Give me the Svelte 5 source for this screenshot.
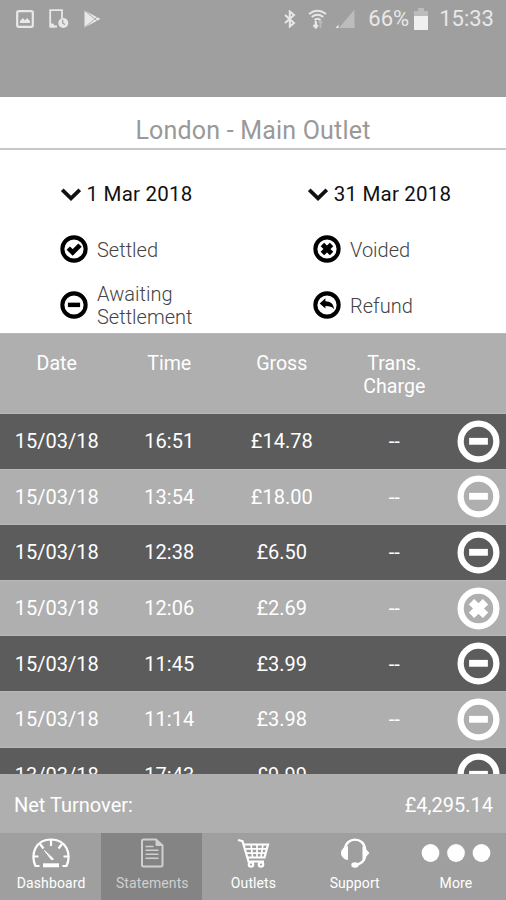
<script lang="ts">
  type Status = 'settled' | 'awaiting' | 'voided' | 'refund';

  interface Transaction {
    date: string;
    time: string;
    gross: string;
    charge: string;
    status: Status;
  }

  const transactions: Transaction[] = [
    { date: '15/03/18', time: '16:51', gross: '£14.78', charge: '--', status: 'awaiting' },
    { date: '15/03/18', time: '13:54', gross: '£18.00', charge: '--', status: 'awaiting' },
    { date: '15/03/18', time: '12:38', gross: '£6.50', charge: '--', status: 'awaiting' },
    { date: '15/03/18', time: '12:06', gross: '£2.69', charge: '--', status: 'voided' },
    { date: '15/03/18', time: '11:45', gross: '£3.99', charge: '--', status: 'awaiting' },
    { date: '15/03/18', time: '11:14', gross: '£3.98', charge: '--', status: 'awaiting' },
    { date: '13/03/18', time: '17:43', gross: '£9.99', charge: '--', status: 'awaiting' },
  ];

  const legend: { status: Status; label: string }[] = [
    { status: 'settled', label: 'Settled' },
    { status: 'voided', label: 'Voided' },
    { status: 'awaiting', label: 'Awaiting Settlement' },
    { status: 'refund', label: 'Refund' },
  ];

  const dates = ['1 Mar 2018', '31 Mar 2018'];
  const tabs = ['Dashboard', 'Statements', 'Outlets', 'Support', 'More'];

  let activeTab = $state('Statements');
</script>

{#snippet statusIcon(status: Status)}
  <svg class="status-icon" viewBox="0 0 44 44" fill="none" stroke="currentColor" aria-hidden="true">
    <circle cx="22" cy="22" r="18.3" stroke-width="6.4" />
    {#if status === 'settled'}
      <path d="M13 20.5l7 7 11.500-11.500" stroke-width="7.4" />
    {:else if status === 'awaiting'}
      <path d="M12.400 21.800h19.200" stroke-width="7" />
    {:else if status === 'voided'}
      <path d="M14.800 15l14.400 14M29.200 15L14.800 29" stroke-width="7.800" />
    {:else}
      <path d="M10.500 19.500l9-8v4.500c8 .2 13 4 13.500 12.500-3-4-7-5-13.500-5v4z" fill="currentColor" stroke="none" />
    {/if}
  </svg>
{/snippet}

<div class="screen">
  <header class="status-bar">
    <div class="notifications">
      <svg width="18" height="18" viewBox="0 0 18 18">
        <rect x="1.200" y="1.200" width="15.600" height="15.600" rx="1.500" fill="none" stroke="currentColor" stroke-width="2.200" />
        <path d="M4 13V11l3-3 2 2.500 2-2.500 3 3v2z" fill="currentColor" />
      </svg>
      <svg width="20" height="20" viewBox="0 0 20 20">
        <path d="M13 9V1.200H1.200V17.500H8" fill="none" stroke="currentColor" stroke-width="1.800" />
        <path d="M1 14.500h3.500l1.500 4H1z" fill="currentColor" />
        <circle cx="14.300" cy="14" r="5" fill="currentColor" />
        <path d="M13.700 10.800v3.400l2.300 1.300" fill="none" stroke="#9f9f9f" stroke-width="1.200" />
      </svg>
      <svg width="17" height="18" viewBox="0 0 17 18">
        <path d="M.5 .5l16 8.500-16 8.500z" fill="currentColor" />
        <path d="M1 1l10 8-10 8M11 9l2-2M11 9l2 2" fill="none" stroke="#9f9f9f" stroke-width=".8" />
      </svg>
    </div>
    <div class="system">
      <svg class="bluetooth" width="12" height="18" viewBox="0 0 12 18" fill="none" stroke="currentColor" stroke-width="2">
        <path d="M1 5l9 8-4.200 3.500v-15L10 5l-9 8" />
      </svg>
      <svg class="wifi" width="19" height="20" viewBox="0 0 19 20" fill="none" stroke="currentColor" stroke-width="1.900">
        <path d="M1 5q8.500-6.500 17 0M3.700 8q5.800-4.500 11.600 0M6.500 11q3-2.500 6 0" />
        <path d="M7.800 18.500v-6.500M5.500 16l2.300 2.500 2-2.500" stroke-width="2.200" />
        <path d="M12.500 19v-6.500M10.800 14l1.700-1.800 1.700 1.800" opacity=".35" />
      </svg>
      <svg class="signal" width="20" height="19" viewBox="0 0 20 19">
        <path d="M19.500.500V19H4z" fill="#bcbcbc" />
        <path d="M3.500 15.500V19H.5z" fill="currentColor" />
      </svg>
      <span class="battery-level">66%</span>
      <svg class="battery" width="14" height="22" viewBox="0 0 14 22">
        <path d="M4 0h6v3h4v19H0V3h4z" fill="#bcbcbc" />
        <path d="M0 8h14v14H0z" fill="#f0f0f0" />
      </svg>
      <span class="clock">15:33</span>
    </div>
  </header>

  <h1 class="outlet">London - Main Outlet</h1>

  <section class="filters">
    <div class="dates">
      {#each dates as date}
        <button class="date">
          <svg width="20" height="13" viewBox="0 0 20 13" fill="none" stroke="#111" stroke-width="3.800">
            <path d="M1.200 1.800L10 10.300l8.800-8.500" />
          </svg>
          {date}
        </button>
      {/each}
    </div>
    <div class="legend">
      {#each legend as item}
        <div class="legend-item">
          {@render statusIcon(item.status)}
          <span>{item.label}</span>
        </div>
      {/each}
    </div>
  </section>

  <div class="row head">
    <span>Date</span>
    <span>Time</span>
    <span>Gross</span>
    <span>Trans.<br />Charge</span>
  </div>

  <main class="list">
    {#each transactions as tx}
      <div class="row">
        <span>{tx.date}</span>
        <span>{tx.time}</span>
        <span>{tx.gross}</span>
        <span>{tx.charge}</span>
        {@render statusIcon(tx.status)}
      </div>
    {/each}
  </main>

  <div class="turnover">
    <span>Net Turnover:</span>
    <span>£4,295.14</span>
  </div>

  <nav class="tabs">
    {#each tabs as tab}
      <button class="tab" class:active={activeTab === tab} onclick={() => (activeTab = tab)}>
        {#if tab === 'Dashboard'}
          <svg width="40" height="30" viewBox="0 0 40 30" fill="none" stroke="currentColor" stroke-width="2.200">
            <path d="M8.500 28H4.500C-1 15.500 5 1.500 20 1.500S41 15.500 35.500 28H31.500" />
            <path d="M20 2v6M9 6l3.500 4.500M31 6l-3.500 4.500M2 18.500h5.500M38 18.500h-5.500" />
            <path d="M13.500 12.500l9 8.500-2 .800z" fill="currentColor" stroke-width="1" />
            <path d="M12 27.300h16" stroke-width="4" />
          </svg>
        {:else if tab === 'Statements'}
          <svg width="24" height="30" viewBox="0 0 24 30" fill="none" stroke="currentColor" stroke-width="2">
            <path d="M3.500 1.500h12.500l6.500 6v19.500q0 1.500-1.500 1.500H3.500Q2 28.500 2 27V3q0-1.500 1.500-1.500z" />
            <path d="M16 1.500v6h6.500z" fill="currentColor" stroke-width="1" />
            <path d="M5.500 8.500h8M5.500 12.300h13M5.500 16.200h13M5.500 20.200h13" stroke-width="1.500" />
          </svg>
        {:else if tab === 'Outlets'}
          <svg width="33" height="30" viewBox="0 0 33 30" fill="none" stroke="currentColor" stroke-width="2.200">
            <path d="M1 2l4.500 1.200L11.500 23.500H27" />
            <path d="M7 6.500h24L27.500 19.500H11" />
            <path d="M8.500 10.800h21M10 15.200h18.500M14 6l1.500 13M20 6v13M26 6l-2 13" stroke-width="1.700" />
            <circle cx="14" cy="26.500" r="2.200" />
            <circle cx="24" cy="26.500" r="2.200" />
          </svg>
        {:else if tab === 'Support'}
          <svg width="30" height="30" viewBox="0 0 30 30" fill="none" stroke="currentColor" stroke-width="2.400">
            <path d="M5 11C6-1.500 24-1.500 25 11v8c-.700 4-4 6.500-8.500 7.800" />
            <path d="M7.500 8.500v13C3.500 21 1.500 18 1.500 15s2-6 6-6.500zM23 8.500v13l6-6.500z" fill="currentColor" stroke-width="1" />
            <ellipse cx="15" cy="27" rx="3.700" ry="2.700" fill="currentColor" stroke="none" />
          </svg>
        {:else}
          <svg width="70" height="30" viewBox="0 0 70 30" fill="currentColor">
            <circle cx="9.500" cy="15" r="8.900" />
            <circle cx="35" cy="15" r="8.900" />
            <circle cx="60.500" cy="15" r="8.900" />
          </svg>
        {/if}
        <span>{tab}</span>
      </button>
    {/each}
  </nav>
</div>

<style>
  :global(body) {
    margin: 0;
    background: #fff;
  }

  button {
    margin: 0;
    padding: 0;
    border: 0;
    background: none;
    font: inherit;
    color: inherit;
  }

  svg {
    flex-shrink: 0;
  }

  .screen {
    display: flex;
    flex-direction: column;
    width: 506px;
    height: 900px;
    overflow: hidden;
    font-family: Roboto, sans-serif;
    font-size: 20px;
    line-height: 23px;
    color: #fff;
  }

  .status-bar {
    display: flex;
    justify-content: space-between;
    align-items: flex-start;
    box-sizing: border-box;
    height: 97px;
    padding: 7px 12px 0 16px;
    background: #9f9f9f;
    color: #e8e8e8;
    flex-shrink: 0;
  }

  .notifications,
  .system {
    display: flex;
    align-items: center;
    height: 23px;
  }

  .notifications {
    gap: 15px;
  }

  .bluetooth {
    margin-right: 12px;
  }

  .wifi {
    margin-right: 8px;
  }

  .signal {
    margin-right: 13px;
  }

  .battery-level,
  .clock {
    font-size: 22px;
  }

  .battery {
    margin: 0 11px 0 5px;
  }

  .outlet {
    box-sizing: border-box;
    height: 53px;
    margin: 0;
    padding-top: 19px;
    border-bottom: 2px solid #c8c8c8;
    font-size: 25px;
    font-weight: 400;
    line-height: 29px;
    letter-spacing: 0.2px;
    text-align: center;
    color: #999;
    flex-shrink: 0;
  }

  .filters {
    box-sizing: border-box;
    height: 183px;
    padding-top: 33px;
    flex-shrink: 0;
  }

  .dates,
  .legend {
    display: grid;
    grid-template-columns: 1fr 1fr;
  }

  .date {
    display: flex;
    justify-content: center;
    align-items: center;
    gap: 6px;
    font-size: 20.5px;
    letter-spacing: 0.2px;
    color: #111;
  }

  .legend {
    grid-template-rows: 56px 56px;
    margin-top: 15px;
  }

  .legend-item {
    display: flex;
    align-items: center;
    gap: 9px;
    padding-left: 60px;
    font-weight: 300;
    color: #444;
  }

  .legend-item span {
    width: 100px;
    padding-top: 2px;
  }

  .legend-item .status-icon {
    width: 28px;
    height: 28px;
    color: #000;
  }

  .row {
    display: grid;
    grid-template-columns: repeat(4, 112.5px) 56px;
    align-items: center;
    box-sizing: border-box;
    height: 55.6px;
    border-top: 1px solid #b8b8b8;
    background: #afafaf;
    text-align: center;
    flex-shrink: 0;
  }

  .row span {
    padding: 1px 0 0 1px;
  }

  .row.head {
    align-items: start;
    height: 80px;
    padding-top: 17px;
    font-size: 19.6px;
  }

  .list {
    height: 361px;
    overflow: hidden;
    flex-shrink: 0;
  }

  .list .row:nth-child(odd) {
    background: #5c5c5c;
  }

  .row .status-icon {
    justify-self: center;
    width: 43px;
    height: 43px;
  }

  .turnover {
    display: flex;
    justify-content: space-between;
    align-items: center;
    box-sizing: border-box;
    height: 59px;
    padding: 4px 13px 0 14px;
    background: #afafaf;
    flex-shrink: 0;
  }

  .tabs {
    display: grid;
    grid-template-columns: repeat(5, 1fr);
    height: 67px;
    background: #9f9f9f;
  }

  .tab {
    display: flex;
    flex-direction: column;
    align-items: center;
    padding: 5px 0 0 1px;
    font-size: 14px;
    line-height: 16px;
    letter-spacing: 0.1px;
    color: #fff;
  }

  .tab span {
    margin-top: 7px;
  }

  .tab.active {
    background: #848484;
    color: #cfcfcf;
  }
</style>
